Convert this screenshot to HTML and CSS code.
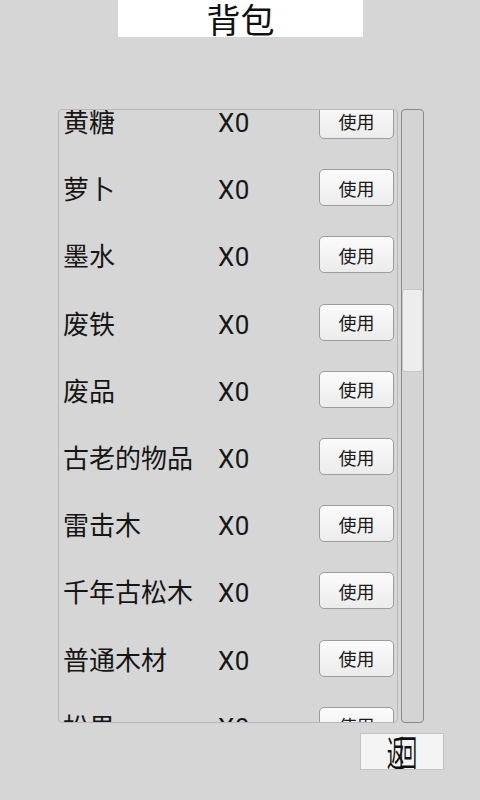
FILE: index.html
```html
<!DOCTYPE html>
<html lang="zh-CN">
<head>
<meta charset="utf-8">
<title>背包</title>
<link rel="stylesheet" href="styles.css">
</head>
<body>
<div class="screen">
  <header class="title-bar">
    <div class="title">背包</div>
  </header>
  <section class="bag">
    <div class="panel">
      <ul class="list">
        <li class="row"><span class="name">黄糖</span><span class="count">X0</span><button class="use">使用</button></li>
        <li class="row"><span class="name">萝卜</span><span class="count">X0</span><button class="use">使用</button></li>
        <li class="row"><span class="name">墨水</span><span class="count">X0</span><button class="use">使用</button></li>
        <li class="row"><span class="name">废铁</span><span class="count">X0</span><button class="use">使用</button></li>
        <li class="row"><span class="name">废品</span><span class="count">X0</span><button class="use">使用</button></li>
        <li class="row"><span class="name">古老的物品</span><span class="count">X0</span><button class="use">使用</button></li>
        <li class="row"><span class="name">雷击木</span><span class="count">X0</span><button class="use">使用</button></li>
        <li class="row"><span class="name">千年古松木</span><span class="count">X0</span><button class="use">使用</button></li>
        <li class="row"><span class="name">普通木材</span><span class="count">X0</span><button class="use">使用</button></li>
        <li class="row"><span class="name">松果</span><span class="count">X0</span><button class="use">使用</button></li>
      </ul>
    </div>
    <div class="track"><div class="thumb"></div></div>
  </section>
  <footer class="actions">
    <button class="back"><span class="back-label">返回</span></button>
  </footer>
</div>
</body>
</html>
```
FILE: styles.css
```css
html, body {
  margin: 0;
  padding: 0;
  background: #d6d6d6;
}
.screen {
  width: 480px;
  height: 800px;
  overflow: hidden;
  font-family: "Noto Sans CJK SC", "Noto Sans", sans-serif;
  color: #161616;
}
.title-bar {
  display: flex;
  justify-content: center;
}
.title {
  width: 245px;
  height: 37px;
  margin-left: 1px;
  background: #ffffff;
  font-size: 34px;
  line-height: 38px;
  text-align: center;
  color: #111;
}
.bag {
  display: flex;
  gap: 3px;
  margin-top: 72px;
  padding-left: 58px;
}
.panel {
  box-sizing: border-box;
  width: 340px;
  height: 614px;
  border: 1px solid #b9b9b9;
  border-radius: 4px;
  overflow: hidden;
}
.list {
  list-style: none;
  margin: -23px 0 0 0;
  padding: 0 0 0 4px;
}
.row {
  display: flex;
  align-items: baseline;
  height: 67.2px;
}
.name {
  width: 155px;
  font-size: 26px;
  line-height: 67px;
  white-space: nowrap;
}
.count {
  width: 101px;
  font-family: Roboto, "Noto Sans", sans-serif;
  font-size: 26px;
  letter-spacing: 0.5px;
  line-height: 67px;
}
.use {
  align-self: center;
  box-sizing: border-box;
  width: 75px;
  height: 37px;
  padding: 0;
  border: 1px solid #9c9c9c;
  border-radius: 5px;
  background: linear-gradient(#fbfbfb, #ececec);
  font-family: "Noto Sans CJK SC", sans-serif;
  font-size: 18px;
  color: #1a1a1a;
}
.track {
  box-sizing: border-box;
  width: 23px;
  height: 614px;
  border: 1px solid #8a8a8a;
  border-radius: 4px;
  background: #d4d4d4;
}
.thumb {
  box-sizing: border-box;
  margin-top: 179px;
  height: 83px;
  background: #ededed;
  border: 1px solid #c6c6c6;
  border-radius: 3px;
}
.actions {
  display: flex;
  justify-content: flex-end;
  padding-right: 36px;
  margin-top: 10px;
}
.back {
  box-sizing: border-box;
  width: 84px;
  height: 37px;
  padding: 0;
  border: 1px solid #c4c4c4;
  background: #f4f4f4;
  display: flex;
  align-items: center;
  justify-content: center;
  overflow: hidden;
}
.back-label {
  display: inline-block;
  font-family: "Noto Sans CJK SC", sans-serif;
  font-size: 36px;
  line-height: 37px;
  letter-spacing: -12px;
  padding-right: 12px;
  transform: scaleX(0.5);
  color: #111;
}
```
